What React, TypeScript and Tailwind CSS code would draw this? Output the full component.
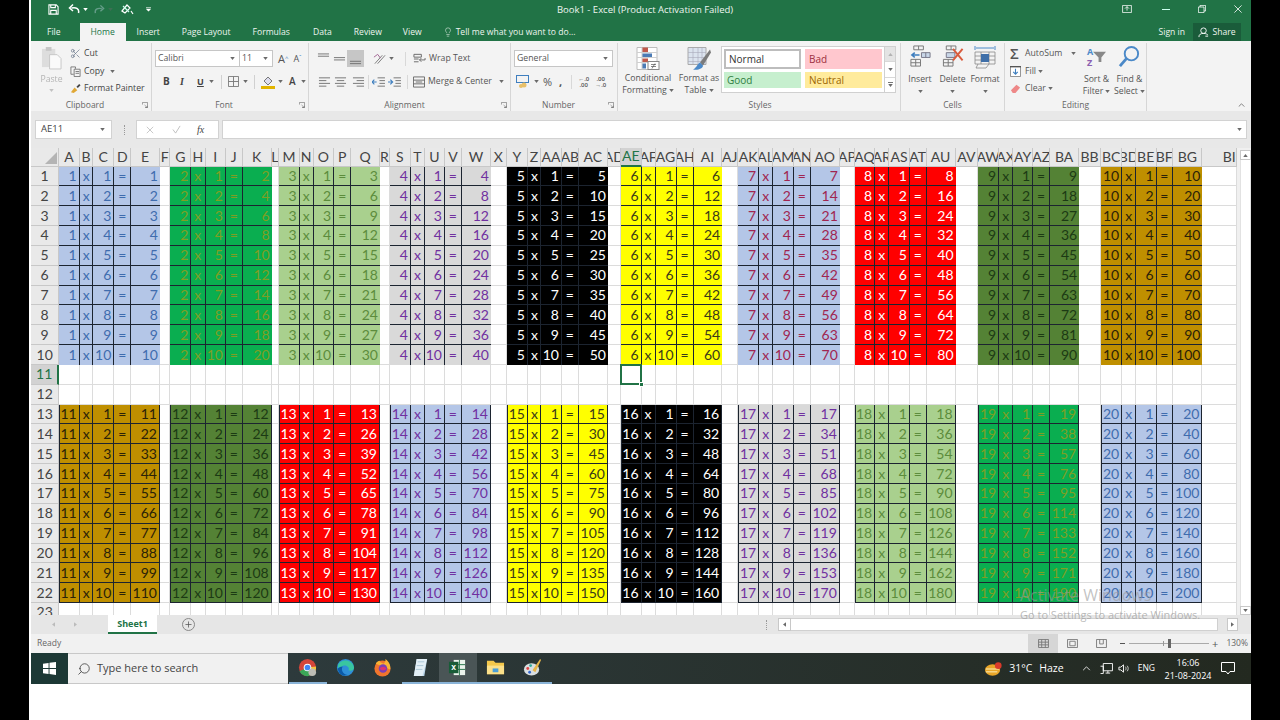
import React from "react";
import { Scissors, Lightbulb, Plus, Search } from "lucide-react";

const LETTERS = (() => {
  const out: string[] = [];
  const A = "ABCDEFGHIJKLMNOPQRSTUVWXYZ";
  for (const c of A) out.push(c);
  for (const c of A) out.push("A" + c);
  for (const c of A) out.push("B" + c);
  return out;
})();

const GROUPS: Record<number, string> = {
  1: "bg-[#b4c6e7] text-[#3f6cae]",
  2: "bg-[#0aae50] text-[#7f9f24]",
  3: "bg-[#a9d08e] text-[#5c8c3c]",
  4: "bg-[#d9d9d9] text-[#7030a0]",
  5: "bg-black text-white",
  6: "bg-[#ffff00] text-[#3a3a1a]",
  7: "bg-[#b4c6e7] text-[#a02550]",
  8: "bg-[#ff0000] text-white",
  9: "bg-[#548235] text-[#1c3a14]",
  10: "bg-[#bf8f00] text-[#2a2208]",
  11: "bg-[#bf8f00] text-[#2a2208]",
  12: "bg-[#548235] text-[#1c3a14]",
  13: "bg-[#ff0000] text-white",
  14: "bg-[#b4c6e7] text-[#7030a0]",
  15: "bg-[#ffff00] text-[#3a3a1a]",
  16: "bg-black text-white",
  17: "bg-[#d9d9d9] text-[#7030a0]",
  18: "bg-[#a9d08e] text-[#5c8c3c]",
  19: "bg-[#0aae50] text-[#7f9f24]",
  20: "bg-[#b4c6e7] text-[#3f6cae]",
};

function Caret({ className = "" }: { className?: string }) {
  return (
    <svg viewBox="0 0 6 4" className={"w-[5px] h-[3px] shrink-0 " + className}>
      <path d="M0 0h6L3 4z" fill="#6a6a6a" />
    </svg>
  );
}

function Cell({ r, c }: { r: number; c: number }) {
  const pos = c % 6;
  const g = Math.floor(c / 6);
  const top = r >= 1 && r <= 10;
  const bot = r >= 13 && r <= 22;
  if (pos !== 5 && (top || bot)) {
    const n = top ? g + 1 : g + 11;
    const m = top ? r : r - 12;
    const val = [String(n), "x", String(m), "=", String(n * m)][pos];
    const align = pos === 1 ? "justify-start pl-[3px]" : pos === 3 ? "justify-center" : "justify-end pr-[2px]";
    const right = top ? (pos < 4 ? "border-r border-r-[#1c2430]" : "") : "border-r border-r-[#1c2430]";
    const bottom = top && r === 10 ? "" : "border-b border-b-[#1c2430]";
    const left = bot && pos === 0 ? "border-l border-l-[#1c2430]" : "";
    return (
      <div className={`flex items-center overflow-hidden whitespace-nowrap text-[14px] leading-none ${align} ${GROUPS[n]} ${right} ${bottom} ${left}`}>
        {val}
      </div>
    );
  }
  if (r === 11 && c === 30) {
    return (
      <div className="relative border-r border-b border-[#dcdcdc] bg-white">
        <div className="absolute left-[-1px] top-[-1px] right-[-1px] bottom-[-1px] border-2 border-[#217346] z-10" />
        <div className="absolute right-[-3px] bottom-[-3px] w-[5px] h-[5px] bg-[#217346] border border-white z-20" />
      </div>
    );
  }
  return <div className="border-r border-b border-[#dcdcdc] bg-white" />;
}

function Sheet() {
  const cols = Array.from({ length: 60 }, (_, i) => i);
  const rows = Array.from({ length: 23 }, (_, i) => i + 1);
  return (
    <div className="flex-1 overflow-hidden bg-[#e9e9e9] font-['Lato'] text-[#444]">
      <div className="grid grid-rows-[18.5px] auto-rows-[19.85px] grid-cols-[28.3px_20.4px_13.6px_21px_17px_28.7px_10.3px_21px_14.4px_20.3px_16.7px_29px_7.6px_20.4px_14px_20.6px_17px_28.7px_10px_21px_14px_20px_17px_29px_16px_21px_13px_21px_17px_29px_13px_20.7px_14px_21px_17px_28.6px_16px_21px_14px_20.7px_16.7px_29.3px_15px_20.3px_14px_20.7px_16.7px_29px_22.6px_21px_14px_20px_17px_29px_22px_21px_13.7px_20.7px_16.6px_29.4px_34.3px]">
        <div className="relative bg-[#e9e9e9] border-r border-b border-[#c8c8c8] overflow-hidden">
          <svg viewBox="0 0 12 12" className="w-[12px] h-[12px] ml-[14px] mt-[4px]">
            <path d="M12 0v12H0z" fill="#b4b4b4" />
          </svg>
        </div>
        {cols.map((c) => {
          const active = c === 30;
          const label = c === 59 ? "BI" : LETTERS[c];
          return (
            <div
              key={c}
              className={`flex items-center overflow-hidden whitespace-nowrap text-[14px] leading-none ${c === 59 ? "justify-end" : "justify-center"} border-r border-b ${
                active ? "bg-[#d2d2d2] text-[#217346] border-r-[#c8c8c8] border-b-2 border-b-[#217346]" : "bg-[#e9e9e9] border-[#c8c8c8]"
              }`}
            >
              {label}
            </div>
          );
        })}
        {rows.map((r) => (
          <React.Fragment key={r}>
            <div
              className={`flex items-center justify-center text-[14px] leading-none border-b ${
                r === 11 ? "bg-[#d2d2d2] text-[#217346] border-r-2 border-r-[#217346] border-b-[#c8c8c8]" : "bg-[#e9e9e9] border-r border-[#c8c8c8]"
              }`}
            >
              {r}
            </div>
            {cols.map((c) => (
              <Cell key={c} r={r} c={c} />
            ))}
          </React.Fragment>
        ))}
      </div>
    </div>
  );
}

function Launcher() {
  return (
    <svg viewBox="0 0 7 7" className="absolute right-[3px] top-[3px] w-[6px] h-[6px]">
      <path d="M.5 3V.5h6v6H3.5M3 3.5l3 3M4 6.5h2.2V4.5" fill="none" stroke="#777" strokeWidth=".8" />
    </svg>
  );
}

function Group({ w, label, launcher, lc = "", children }: { w: string; label: string; launcher?: boolean; lc?: string; children: React.ReactNode }) {
  return (
    <div className={`${w} relative h-[68px] mt-[2px] border-r border-[#d6d6d6] flex flex-col shrink-0`}>
      <div className="flex-1 min-h-0">{children}</div>
      <div className={`relative h-[12px] flex items-center justify-center text-[8.5px] leading-none text-[#666] ${lc}`}>
        {label}
        {launcher && <Launcher />}
      </div>
    </div>
  );
}

function Lines({ kind }: { kind: "top" | "mid" | "bot" | "left" | "center" | "right" | "in" | "out" }) {
  const c = "#707070";
  const paths: Record<string, string> = {
    top: "M1 1h12M1 3.5h12",
    mid: "M1 5h12M1 7.5h12",
    bot: "M1 9h12M1 11.5h12",
    left: "M1 2h12M1 5h8M1 8h12M1 11h8",
    center: "M1 2h12M3 5h8M1 8h12M3 11h8",
    right: "M1 2h12M5 5h8M1 8h12M5 11h8",
    in: "M6 2h8M8 5h6M8 8h6M6 11h8",
    out: "M6 2h8M8 5h6M8 8h6M6 11h8",
  };
  return (
    <svg viewBox="0 0 14 13" className="w-[13px] h-[12px] shrink-0">
      <path d={paths[kind]} stroke={c} strokeWidth="1" fill="none" />
      {kind === "in" && <path d="M5 6.5H0M2.5 4L0 6.5 2.5 9" stroke="#3f7fbf" strokeWidth="1.2" fill="none" />}
      {kind === "out" && <path d="M0 6.5h5M2.5 4L5 6.5 2.5 9" stroke="#3f7fbf" strokeWidth="1.2" fill="none" />}
    </svg>
  );
}

function Clipboard() {
  return (
    <Group w="w-[121px]" label="Clipboard" launcher lc="pr-[12px]">
      <div className="flex pt-[1px]">
        <div className="w-[39px] flex flex-col items-center opacity-60 pt-[2px] pl-[2px]">
          <svg viewBox="0 0 22 25" className="w-[21px] h-[24px]">
            <rect x="1" y="3" width="14" height="19" fill="#cfcfcf" />
            <rect x="5" y="1" width="6" height="4" fill="#a9a9a9" />
            <path d="M9 9h8l4 4v11H9z" fill="#fff" stroke="#aaa" />
          </svg>
          <div className="text-[8.7px] leading-none mt-[5px] text-[#8a8a8a]">Paste</div>
          <Caret className="mt-[5px] opacity-60" />
        </div>
        <div className="flex flex-col pt-[1px] text-[8.7px] text-[#444]">
          <div className="h-[17.5px] flex items-center">
            <Scissors className="w-[11px] h-[11px] text-[#5a6a80] mr-[3px]" strokeWidth={1.4} />
            Cut
          </div>
          <div className="h-[17.5px] flex items-center">
            <svg viewBox="0 0 12 12" className="w-[11px] h-[11px] mr-[3px]">
              <path d="M1 1h5v2M1 1v8h3M4.5 3.5H11v8H4.5zM6 6h4M6 8h4" fill="none" stroke="#6a6a6a" strokeWidth=".9" />
            </svg>
            Copy
            <Caret className="ml-[6px]" />
          </div>
          <div className="h-[17.5px] flex items-center">
            <svg viewBox="0 0 12 12" className="w-[11px] h-[11px] mr-[3px]">
              <path d="M1 10l4-5 3 3-4 3z" fill="#e0a836" />
              <path d="M7 4l3-3 1.5 1.5-3 3z" fill="#444" />
            </svg>
            Format Painter
          </div>
        </div>
      </div>
    </Group>
  );
}

function Font() {
  return (
    <Group w="w-[157px]" label="Font" launcher lc="pr-[12px]">
      <div className="flex flex-col pl-[3px] pt-[7px]">
        <div className="flex items-center h-[17px]">
          <div className="w-[85px] h-full bg-white border border-[#c6c6c6] flex items-center justify-between pl-[2px] pr-[4px] text-[8.7px] text-[#555]">
            Calibri <Caret />
          </div>
          <div className="w-[33px] h-full bg-white border border-l-0 border-[#c6c6c6] flex items-center justify-between pl-[2px] pr-[4px] text-[8.7px] text-[#555]">
            11 <Caret />
          </div>
          <div className="ml-[5px] text-[11px] leading-none text-[#555]">A<sup className="text-[6px] text-[#3f7fbf]">^</sup></div>
          <div className="ml-[5px] text-[9px] leading-none text-[#555]">A<sup className="text-[6px] text-[#3f7fbf]">ˇ</sup></div>
        </div>
        <div className="flex items-center h-[17px] mt-[6px] text-[10px] text-[#444]">
          <span className="ml-[8px] w-[17px] font-bold">B</span>
          <span className="w-[17px] italic font-['Liberation_Serif'] font-bold">I</span>
          <span className="w-[12px] underline font-bold text-[9px]">U</span>
          <Caret />
          <div className="w-px h-[14px] bg-[#d0d0d0] ml-[7px]" />
          <svg viewBox="0 0 12 12" className="w-[11px] h-[11px] ml-[6px]">
            <path d="M.5.5h11v11H.5zM6 .5v11M.5 6h11" fill="none" stroke="#777" />
          </svg>
          <Caret className="ml-[4px]" />
          <div className="w-px h-[14px] bg-[#d0d0d0] ml-[6px]" />
          <svg viewBox="0 0 14 14" className="w-[14px] h-[14px] ml-[6px]">
            <path d="M3 6l4-4 4 4-4 4z" fill="#dde" stroke="#777" />
            <rect x="0" y="11" width="14" height="3" fill="#e2b400" />
          </svg>
          <Caret className="ml-[3px]" />
          <span className="ml-[6px] text-[#444] font-semibold">A</span>
          <Caret className="ml-[5px]" />
        </div>
      </div>
    </Group>
  );
}

function Alignment() {
  return (
    <Group w="w-[202px]" label="Alignment" launcher lc="pr-[10px]">
      <div className="flex flex-col pl-[6px] pt-[7px] text-[8.7px] text-[#555]">
        <div className="flex items-center h-[17px]">
          <div className="w-[16px] flex justify-center"><Lines kind="top" /></div>
          <div className="w-[16px] flex justify-center"><Lines kind="mid" /></div>
          <div className="w-[17px] h-[17px] bg-[#c6c6c6] flex items-center justify-center"><Lines kind="bot" /></div>
          <svg viewBox="0 0 14 12" className="w-[13px] h-[12px] ml-[9px]">
            <path d="M2 11l8-9M5 11l8-9" stroke="#777" />
            <path d="M1 4l4-3 3 4" stroke="#a06090" fill="none" />
          </svg>
          <Caret className="ml-[3px]" />
          <div className="w-px h-[14px] bg-[#d8d8d8] ml-[11px]" />
          <svg viewBox="0 0 14 12" className="w-[13px] h-[12px] ml-[7px]">
            <path d="M1 1h8v3H1zM1 6h5M1 9h5M7 7h6v-2M9 5l-2 2 2 2" fill="none" stroke="#666" />
          </svg>
          <span className="ml-[3px] whitespace-nowrap">Wrap Text</span>
        </div>
        <div className="flex items-center h-[17px] mt-[6px]">
          <div className="w-[3px]" />
          <Lines kind="left" />
          <div className="w-[3px]" />
          <Lines kind="center" />
          <div className="w-[5px]" />
          <Lines kind="right" />
          <div className="w-px h-[14px] bg-[#d8d8d8] ml-[3px]" />
          <div className="w-[3px]" />
          <Lines kind="in" />
          <div className="w-[3px]" />
          <Lines kind="out" />
          <div className="w-px h-[14px] bg-[#d8d8d8] ml-[6px]" />
          <svg viewBox="0 0 13 12" className="w-[12px] h-[12px] ml-[5px]">
            <path d="M.5.5h12v11H.5zM.5 4h12M.5 8h12M3 6h7" fill="none" stroke="#666" />
          </svg>
          <span className="ml-[3px] whitespace-nowrap">Merge &amp; Center</span>
          <Caret className="ml-[7px]" />
        </div>
      </div>
    </Group>
  );
}

function NumberGroup() {
  return (
    <Group w="w-[107px]" label="Number" launcher lc="pr-[11px]">
      <div className="flex flex-col pl-[3px] pt-[7px] text-[#555]">
        <div className="w-[99px] h-[17px] bg-white border border-[#c6c6c6] flex items-center justify-between pl-[2px] pr-[4px] text-[8.7px]">
          General <Caret />
        </div>
        <div className="flex items-center h-[17px] mt-[6px] pl-[2px]">
          <svg viewBox="0 0 14 13" className="w-[14px] h-[13px]">
            <rect x=".5" y=".5" width="12" height="7" fill="none" stroke="#3f7fbf" />
            <circle cx="8" cy="10" r="2.5" fill="#e8c06a" />
            <circle cx="5" cy="11" r="2" fill="#e8c06a" />
          </svg>
          <Caret className="ml-[4px]" />
          <span className="ml-[4px] text-[11px] leading-none">%</span>
          <span className="ml-[7px] text-[11px] leading-none font-bold relative">,</span>
          <div className="w-px h-[14px] bg-[#d8d8d8] ml-[9px]" />
          <div className="ml-[5px] w-[13px] text-[6px] leading-[6px] text-center font-semibold">←.0<br />.00</div>
          <div className="ml-[4px] w-[13px] text-[6px] leading-[6px] text-center font-semibold">.00<br />→.0</div>
        </div>
      </div>
    </Group>
  );
}

function CondIcon() {
  return (
    <svg viewBox="0 0 24 24" className="w-[24px] h-[25px] mt-[2px]">
      <path d="M1 1h20v22H1z" fill="#fff" stroke="#bdbdbd" />
      <rect x="6" y="1" width="6" height="5" fill="#c0584a" />
      <rect x="6" y="7" width="10" height="4" fill="#4b7bb5" />
      <rect x="6" y="12" width="6" height="4" fill="#c0584a" />
      <rect x="6" y="17" width="4" height="5" fill="#4b7bb5" />
      <path d="M1 6h20M1 11h20M1 16h20M6 1v22" stroke="#cfcfcf" fill="none" />
      <rect x="12" y="15" width="11" height="8" fill="#fff" stroke="#888" />
      <path d="M15 18h5M15 20h5M19 17l-3 5" stroke="#555" strokeWidth=".7" />
    </svg>
  );
}

function TableIcon() {
  return (
    <svg viewBox="0 0 24 24" className="w-[24px] h-[25px] mt-[2px]">
      <path d="M1 1h18v17H1z" fill="#dbe3ee" stroke="#aaa" />
      <path d="M1 6h18M1 11h18M1 15h18M6 1v17M11 1v17M15 1v17" stroke="#aab" strokeWidth=".6" />
      <path d="M23 3L13 16l3 3L24 6z" fill="#7b7b7b" />
      <path d="M13 16c-3 2-4 6-7 7 5 1 10-1 10-4z" fill="#4b89c8" />
    </svg>
  );
}

function Styles() {
  return (
    <Group w="w-[283px]" label="Styles" lc="pl-[2px]">
      <div className="flex text-[8.7px] text-[#555] leading-[12px] pt-[1px]">
        <div className="w-[58px] ml-[1px] flex flex-col items-center">
          <CondIcon />
          <div className="mt-[1px] whitespace-nowrap">Conditional</div>
          <div className="flex items-center gap-[2px] whitespace-nowrap">Formatting <Caret /></div>
        </div>
        <div className="w-[42px] ml-[1px] flex flex-col items-center">
          <TableIcon />
          <div className="mt-[1px] whitespace-nowrap">Format as</div>
          <div className="flex items-center gap-[2px] whitespace-nowrap">Table <Caret /></div>
        </div>
        <div className="ml-[1px] w-[175px] h-[47px] mt-[2px] bg-white border border-[#d0d0d0] flex">
          <div className="grid grid-cols-[77px_77px] grid-rows-[20px_16px] gap-x-[4px] gap-y-[3px] pl-[2px] pt-[2px] text-[10px] leading-none">
            <div className="bg-white border-2 border-[#bdbdbd] flex items-center pl-[3px] text-[#333]">Normal</div>
            <div className="bg-[#ffc7ce] flex items-center pl-[4px] text-[#9c3040]">Bad</div>
            <div className="bg-[#c6efce] flex items-center pl-[3px] text-[#2f7d3e]">Good</div>
            <div className="bg-[#ffeb9c] flex items-center pl-[4px] text-[#9c6500]">Neutral</div>
          </div>
          <div className="ml-auto w-[11px] h-full flex flex-col border-l border-[#d0d0d0] text-[#777]">
            <div className="flex-1 bg-[#e4e4e4] flex items-center justify-center"><Caret className="rotate-180 opacity-40" /></div>
            <div className="flex-1 flex items-center justify-center border-y border-[#d8d8d8]"><Caret /></div>
            <div className="flex-1 flex flex-col items-center justify-center gap-[1px]"><div className="w-[5px] h-px bg-[#777]" /><Caret /></div>
          </div>
        </div>
      </div>
    </Group>
  );
}

function BigButton({ label, icon, w, two }: { label: string; icon: React.ReactNode; w: string; two?: string }) {
  return (
    <div className={`${w} flex flex-col items-center text-[8.7px] text-[#555] leading-[12px]`}>
      <div className="h-[25px] flex items-center justify-center">{icon}</div>
      <div className="mt-[4px] whitespace-nowrap">{label}</div>
      {two ? (
        <div className="flex items-center gap-[2px] whitespace-nowrap">{two} <Caret /></div>
      ) : (
        <Caret className="mt-[5px]" />
      )}
    </div>
  );
}

function Cells() {
  const grid = (
    <>
      <path d="M5 1h10v4H5zM10 1v4M2 15h10v7H2zM7 15v7M2 18.5h10" fill="none" stroke="#777" />
    </>
  );
  return (
    <Group w="w-[104px]" label="Cells">
      <div className="flex pl-[3px] pt-[1px]">
        <BigButton
          w="w-[32px]"
          label="Insert"
          icon={
            <svg viewBox="0 0 24 24" className="w-[23px] h-[23px]">
              {grid}
              <path d="M13 8h9v5h-9zM17.5 8v5" fill="#c9d7e8" stroke="#778" />
              <path d="M11 10.500H3M6 8l-3 2.500L6 13" stroke="#3f7fbf" strokeWidth="1.6" fill="none" />
            </svg>
          }
        />
        <BigButton
          w="w-[33px]"
          label="Delete"
          icon={
            <svg viewBox="0 0 24 24" className="w-[24px] h-[23px]">
              {grid}
              <path d="M5 8h9v5H5z" fill="#c9d7e8" stroke="#778" />
              <path d="M12 4l10 12M22 4L12 16" stroke="#d95b3c" strokeWidth="2" />
            </svg>
          }
        />
        <BigButton
          w="w-[32px]"
          label="Format"
          icon={
            <svg viewBox="0 0 24 24" className="w-[24px] h-[24px]">
              <path d="M2 1v4M22 1v4M3 3h18" stroke="#4b89c8" fill="none" />
              <path d="M2 7h20v12H2zM2 11h20M2 15h20M8 7v12M16 7v12M5 19l-2 4h10l3-4" fill="none" stroke="#888" strokeWidth=".8" />
              <rect x="8" y="9" width="8" height="8" fill="#3f6fa8" />
            </svg>
          }
        />
      </div>
    </Group>
  );
}

function Editing() {
  return (
    <Group w="w-[142px]" label="Editing">
      <div className="flex pl-[5px] pt-[1px] text-[8.7px] text-[#555]">
        <div className="w-[70px] flex flex-col pt-[1px]">
          <div className="h-[17.5px] flex items-center">
            <span className="w-[15px] text-[15px] leading-none text-[#555] font-semibold">Σ</span>
            AutoSum
            <Caret className="ml-[9px]" />
          </div>
          <div className="h-[17.5px] flex items-center">
            <svg viewBox="0 0 12 12" className="w-[11px] h-[11px] mr-[4px]">
              <path d="M.5.5h11v11H.5z" fill="#fff" stroke="#888" />
              <path d="M0 .5h12" stroke="#555" strokeWidth="2" />
              <path d="M6 3v6M3.500 6.500L6 9l2.500-2.500" stroke="#3f7fbf" strokeWidth="1.2" fill="none" />
            </svg>
            Fill
            <Caret className="ml-[2px]" />
          </div>
          <div className="h-[17.5px] flex items-center">
            <svg viewBox="0 0 12 12" className="w-[11px] h-[11px] mr-[4px]">
              <path d="M1 8l6-6 4 3-5 6H3z" fill="#e88" />
            </svg>
            Clear
            <Caret className="ml-[2px]" />
          </div>
        </div>
        <BigButton
          w="w-[33px]"
          label="Sort &"
          two="Filter"
          icon={
            <div className="flex items-center">
              <div className="text-[9px] leading-[11px] font-bold">
                <div className="text-[#4b89c8]">A</div>
                <div className="text-[#8a5fb0]">Z</div>
              </div>
              <svg viewBox="0 0 14 14" className="w-[13px] h-[13px]">
                <path d="M0 2h14L9 8v5H6V8z" fill="#888" />
              </svg>
            </div>
          }
        />
        <BigButton
          w="w-[33px]"
          label="Find &"
          two="Select"
          icon={
            <svg viewBox="0 0 24 24" className="w-[23px] h-[23px]">
              <circle cx="14" cy="9" r="7" fill="none" stroke="#4b89c8" strokeWidth="2" />
              <path d="M9 14l-7 8" stroke="#4b89c8" strokeWidth="3" />
            </svg>
          }
        />
      </div>
    </Group>
  );
}

function Ribbon() {
  return (
    <div className="h-[70px] bg-[#f3f3f3] flex items-start relative">
      <Clipboard />
      <Font />
      <Alignment />
      <NumberGroup />
      <Styles />
      <Cells />
      <Editing />
      <div className="ml-auto mt-[62px] mr-[6px]">
        <svg viewBox="0 0 8 5" className="w-[7px] h-[4px]">
          <path d="M.5 4.500L4 1l3.500 3.500" stroke="#666" fill="none" />
        </svg>
      </div>
    </div>
  );
}

function TitleBar() {
  const tabs: [string, string][] = [
    ["File", "ml-[16px]"],
    ["Home", ""],
    ["Insert", "ml-[11px]"],
    ["Page Layout", "ml-[22px]"],
    ["Formulas", "ml-[22px]"],
    ["Data", "ml-[23px]"],
    ["Review", "ml-[22px]"],
    ["View", "ml-[21px]"],
  ];
  return (
    <div className="h-[41px] bg-[#217346] text-[#eef5f0] flex flex-col">
      <div className="h-[23px] pb-[5px] flex items-center text-[8.7px]">
        <div className="flex-1 flex items-center pl-[17px]">
          <svg viewBox="0 0 12 12" className="w-[11px] h-[11px]">
            <path d="M1 1h8l2 2v8H1zM3 1v3h5V1M3 11V7h6v4" fill="none" stroke="#fff" strokeWidth="1.2" />
          </svg>
          <svg viewBox="0 0 12 12" className="w-[12px] h-[12px] ml-[9px]">
            <path d="M10.500 10c1-4-2-6-7-5M5 1.500L1.500 5 5 8" fill="none" stroke="#fff" strokeWidth="1.5" />
          </svg>
          <Caret className="ml-[3px] brightness-[3]" />
          <svg viewBox="0 0 12 12" className="w-[11px] h-[11px] ml-[6px] opacity-40">
            <path d="M1.500 10c-1-4 2-6 7-5M7 1.500L10.500 5 7 8" fill="none" stroke="#cde" strokeWidth="1.500" />
          </svg>
          <Caret className="ml-[3px] opacity-40" />
          <svg viewBox="0 0 14 12" className="w-[14px] h-[12px] ml-[7px]">
            <path d="M2 8l5-6 3 3-5 5zM11 8l2 3" fill="none" stroke="#fff" strokeWidth="1.200" />
            <path d="M3 3l6 6" stroke="#cfe" strokeWidth="1.200" />
          </svg>
          <svg viewBox="0 0 6 5" className="w-[5px] h-[5px] ml-[12px]">
            <path d="M0 0h6M0 2h6L3 5z" fill="#fff" stroke="none" />
            <path d="M0 .5h6" stroke="#fff" />
          </svg>
        </div>
        <div className="whitespace-nowrap text-[9.5px] pt-[2px]">Book1 - Excel (Product Activation Failed)</div>
        <div className="flex-1 flex items-center justify-end pr-[9px]">
          <svg viewBox="0 0 12 10" className="w-[10px] h-[8px]">
            <path d="M.5.5h11v9H.5z" fill="none" stroke="#fff" />
            <path d="M6 2v5M3.500 4.500L6 2l2.500 2.500" stroke="#fff" fill="none" />
          </svg>
          <div className="w-[8px] h-px bg-[#cfe] ml-[30px]" />
          <svg viewBox="0 0 10 10" className="w-[8px] h-[8px] ml-[28px]">
            <path d="M.5 2.500h7v7h-7zM2.500 2.500v-2h7v7h-2" fill="none" stroke="#fff" />
          </svg>
          <svg viewBox="0 0 10 10" className="w-[8px] h-[8px] ml-[28px]">
            <path d="M.5.5l9 9M9.500.5l-9 9" stroke="#fff" />
          </svg>
        </div>
      </div>
      <div className="h-[18px] flex items-end text-[8.6px] leading-none">
        {tabs.map(([t, m]) =>
          t === "Home" ? (
            <div key={t} className="h-[18px] w-[46px] ml-[19px] bg-[#f3f3f3] text-[#217346] flex items-center justify-center">
              Home
            </div>
          ) : (
            <div key={t} className={`h-[18px] flex items-center whitespace-nowrap ${m}`}>
              {t}
            </div>
          )
        )}
        <div className="h-[18px] flex items-center ml-[21px] whitespace-nowrap">
          <Lightbulb className="w-[10px] h-[10px] mr-[3px]" strokeWidth={1.3} />
          Tell me what you want to do...
        </div>
        <div className="ml-auto h-[18px] flex items-center mr-[10px]">
          <span>Sign in</span>
          <div className="ml-[8px] h-[18px] w-[48px] bg-[#1a5c3a] flex items-center justify-center gap-[3px]">
            <svg viewBox="0 0 12 12" className="w-[11px] h-[11px]">
              <circle cx="6" cy="4" r="3" fill="none" stroke="#fff" />
              <path d="M1 11c0-3 2-4 5-4s4 1 5 2M8 10h3" fill="none" stroke="#fff" />
            </svg>
            Share
          </div>
        </div>
      </div>
    </div>
  );
}

function FormulaBar() {
  return (
    <div className="h-[37px] bg-[#e8e8e8] flex items-start pt-[9px] text-[#444] shrink-0">
      <div className="ml-[4px] w-[77px] h-[19px] bg-white border border-[#d2d2d2] flex items-center justify-between pl-[5px] pr-[6px] text-[9.5px]">
        AE11 <Caret />
      </div>
      <div className="ml-[12px] w-[2px] h-[10px] mt-[5px] border-l border-dotted border-[#999]" />
      <div className="ml-[10px] w-[83px] h-[19px] bg-white border border-[#d2d2d2] flex items-center">
        <svg viewBox="0 0 10 10" className="w-[8px] h-[8px] ml-[9px]">
          <path d="M1 1l8 8M9 1l-8 8" stroke="#bbb" />
        </svg>
        <svg viewBox="0 0 10 10" className="w-[9px] h-[9px] ml-[18px]">
          <path d="M1 5l3 4 5-8" stroke="#bbb" fill="none" />
        </svg>
        <span className="ml-[16px] font-['Liberation_Serif'] italic text-[10px] text-[#444]">fx</span>
      </div>
      <div className="ml-[3px] w-[1025px] h-[19px] bg-white border border-[#d2d2d2] flex items-center justify-end pr-[4px]">
        <Caret />
      </div>
    </div>
  );
}

function Scroll() {
  return (
    <div className="w-[14px] bg-[#f0f0f0] pl-[3px] pt-[2px] flex flex-col">
      <div className="h-[10px] w-[11px] bg-white border border-[#c8c8c8] flex items-center justify-center">
        <Caret className="rotate-180" />
      </div>
      <div className="flex-1 w-[11px] bg-white border-x border-[#e2e2e2]" />
      <div className="h-[9px] w-[11px] bg-white border border-[#c8c8c8] flex items-center justify-center">
        <Caret />
      </div>
    </div>
  );
}

function TabsBar() {
  return (
    <div className="h-[19px] bg-[#e6e6e6] flex items-center text-[#555] shrink-0">
      <svg viewBox="0 0 4 6" className="w-[3px] h-[5px] ml-[21px]"><path d="M4 0v6L0 3z" fill="#bbb" /></svg>
      <svg viewBox="0 0 4 6" className="w-[3px] h-[5px] ml-[19px]"><path d="M0 0v6l4-3z" fill="#bbb" /></svg>
      <div className="ml-[31px] w-[49px] h-[19px] bg-white border-b-2 border-[#217346] flex items-center justify-center text-[9px] font-bold text-[#217346]">
        Sheet1
      </div>
      <div className="ml-[25px] w-[13px] h-[13px] rounded-full border border-[#888] flex items-center justify-center">
        <Plus className="w-[9px] h-[9px] text-[#555]" strokeWidth={2} />
      </div>
      <div className="ml-[571px] w-[2px] h-[10px] border-l border-dotted border-[#999]" />
      <div className="ml-[10px] flex items-center h-[13px]">
        <div className="w-[13px] h-[13px] bg-white border border-[#c8c8c8] flex items-center justify-center">
          <Caret className="rotate-90" />
        </div>
        <div className="w-[427px] h-[13px] bg-white border-y border-r border-[#d0d0d0]" />
        <div className="w-[9px]" />
        <div className="w-[11px] h-[13px] bg-white border border-[#c8c8c8] flex items-center justify-center">
          <Caret className="-rotate-90" />
        </div>
      </div>
    </div>
  );
}

function StatusBar() {
  return (
    <div className="h-[19px] bg-[#f1f1f1] flex items-center text-[8.5px] text-[#666] shrink-0">
      <span className="ml-[6px]">Ready</span>
      <div className="ml-auto flex items-center h-full">
        <div className="w-[30px] h-full bg-[#d6d6d6] flex items-center justify-center">
          <svg viewBox="0 0 12 10" className="w-[11px] h-[9px]"><path d="M.5.5h11v9H.5zM.5 3.500h11M.5 6.500h11M4 .5v9M8 .5v9" fill="none" stroke="#777" /></svg>
        </div>
        <svg viewBox="0 0 12 10" className="w-[11px] h-[9px] ml-[9px]"><path d="M.5.5h11v9H.5zM3 2.500h6v5H3z" fill="none" stroke="#777" /></svg>
        <svg viewBox="0 0 12 10" className="w-[11px] h-[9px] ml-[18px]"><path d="M.5.5h11v9H.5zM4 .5v5h4v-5" fill="none" stroke="#777" /></svg>
        <div className="w-[5px] h-px bg-[#555] ml-[13px]" />
        <div className="ml-[4px] w-[80px] h-px bg-[#aaa] relative">
          <div className="absolute left-[39px] top-[-4px] w-[3px] h-[9px] bg-[#666]" />
          <div className="absolute left-[34px] top-[-2px] w-px h-[5px] bg-[#999]" />
        </div>
        <span className="ml-[3px] text-[11px] leading-none text-[#555]">+</span>
        <span className="ml-[8px] mr-[3px]">130%</span>
      </div>
    </div>
  );
}

function Taskbar() {
  const apps = [
    {
      bar: true,
      icon: (
        <svg viewBox="0 0 20 20" className="w-[19px] h-[19px]">
          <circle cx="10" cy="10" r="9" fill="#d5453a" />
          <path d="M10 10L1.500 14A9 9 0 0 0 14 18z" fill="#3aa757" />
          <path d="M10 10l4 8a9 9 0 0 0 5-9z" fill="#f5c33b" />
          <circle cx="10" cy="10" r="4" fill="#fff" />
          <circle cx="10" cy="10" r="3" fill="#4285f4" />
          <circle cx="15" cy="15" r="4" fill="#bdbdb5" />
        </svg>
      ),
    },
    {
      bar: false,
      icon: (
        <svg viewBox="0 0 20 20" className="w-[19px] h-[19px]">
          <circle cx="10" cy="10" r="9" fill="#2f8fd8" />
          <path d="M2 8c2-7 15-8 17 2 0 3-3 4-6 3 2-3-2-6-5-5S4 12 5 15C3 13 2 11 2 8z" fill="#39c6a0" />
          <path d="M7 9c-2 3 0 8 5 9-6 2-10-3-10-7 1-1 3-2 5-2z" fill="#0b5aa8" />
        </svg>
      ),
    },
    {
      bar: false,
      icon: (
        <svg viewBox="0 0 20 20" className="w-[19px] h-[19px]">
          <circle cx="10" cy="11" r="8.500" fill="#f0752d" />
          <path d="M3 6c1-2 3-3 4-3 0 2 2 2 4 3 3-2 2-4 2-5 4 3 6 7 5 11z" fill="#f9b233" />
          <circle cx="10.500" cy="11" r="4.500" fill="#7b3fb5" />
          <path d="M7 11c2-2 5-2 7 0-1 2-5 3-7 0z" fill="#e0326e" />
        </svg>
      ),
    },
    {
      bar: true,
      icon: (
        <svg viewBox="0 0 20 20" className="w-[19px] h-[19px]">
          <path d="M6 1h11l-3 18H3z" fill="#bcd7ea" />
          <path d="M6 1h11l-5 18H3z" fill="#e3eff6" />
          <path d="M7 4h7M6 8h7M5 12h7" stroke="#8fb3c9" strokeWidth=".7" />
        </svg>
      ),
    },
    {
      bar: true,
      active: true,
      icon: (
        <svg viewBox="0 0 20 20" className="w-[19px] h-[19px]">
          <rect x="6" y="2" width="12" height="16" fill="#eaf3ec" />
          <path d="M12 2v16M6 7h12M6 12h12" stroke="#217346" strokeWidth="1" />
          <rect x="1" y="4" width="10" height="12" fill="#185c37" />
          <text x="6" y="13" textAnchor="middle" fontSize="9" fontWeight="700" fill="#fff" fontFamily="Liberation Sans">x</text>
        </svg>
      ),
    },
    {
      bar: true,
      icon: (
        <svg viewBox="0 0 20 20" className="w-[19px] h-[19px]">
          <path d="M1 3h7l2 2h9v12H1z" fill="#f4c84b" />
          <path d="M1 8h18v9H1z" fill="#fbe08a" />
          <rect x="7" y="11" width="6" height="4" fill="#4a9fd8" />
        </svg>
      ),
    },
    {
      bar: true,
      icon: (
        <svg viewBox="0 0 20 20" className="w-[19px] h-[19px]">
          <ellipse cx="9" cy="12" rx="8" ry="6.500" fill="#d8dee0" />
          <circle cx="5" cy="11" r="1.500" fill="#d44" />
          <circle cx="8" cy="8" r="1.500" fill="#3a9" />
          <circle cx="7" cy="15" r="1.500" fill="#36c" />
          <path d="M10 13L18 1l1 1-6 13z" fill="#e8b54a" />
        </svg>
      ),
    },
  ];
  return (
    <div className="h-[31px] flex text-white shrink-0">
      <div className="w-[37px] bg-[#1c3835] flex items-center justify-center">
        <svg viewBox="0 0 14 14" className="w-[13px] h-[13px]">
          <path d="M0 2l6-1v5.500H0zM7 .8L14 0v6.500H7zM0 7.500h6V13l-6-1zM7 7.500h7V14l-7-1z" fill="#fff" />
        </svg>
      </div>
      <div className="w-[220px] bg-[#f1f1f1] border-y border-[#c8c8c8] flex items-center pl-[9px] text-[11px] text-[#444]">
        <Search className="w-[14px] h-[14px] -scale-x-100 text-[#333] mr-[6px]" strokeWidth={1.3} />
        Type here to search
      </div>
      <div className="flex-1 flex items-stretch bg-linear-to-r from-[#2d3a3c] to-[#232920] pl-[1px]">
        {apps.map((a, i) => (
          <div
            key={i}
            className={`w-[37.500px] flex items-center justify-center border-b-2 ${a.bar ? "border-[#8ab4d8]" : "border-transparent"} ${a.active ? "bg-[#4a5556]" : ""}`}
          >
            {a.icon}
          </div>
        ))}
        <div className="flex-1" />
        <div className="flex items-center">
          <svg viewBox="0 0 20 16" className="w-[19px] h-[16px]">
            <ellipse cx="9" cy="9" rx="8" ry="6" fill="#e8a528" />
            <path d="M2 8h14M2 11h12" stroke="#fff2c0" />
            <circle cx="15" cy="4.500" r="3.500" fill="#d93a2b" />
          </svg>
          <span className="ml-[6px] text-[10.5px]">31°C</span>
          <span className="ml-[7px] text-[10.5px]">Haze</span>
          <svg viewBox="0 0 10 6" className="w-[9px] h-[5px] ml-[18px]">
            <path d="M1 5l4-4 4 4" fill="none" stroke="#fff" />
          </svg>
          <svg viewBox="0 0 14 12" className="w-[13px] h-[11px] ml-[9px]">
            <path d="M3.500.5h10v8h-10zM.5 3.500h3v8h-3M6 11h5M8.500 8.500V11" fill="none" stroke="#fff" />
          </svg>
          <svg viewBox="0 0 12 12" className="w-[11px] h-[11px] ml-[5px]">
            <path d="M1 4.500h2L6 2v8L3 7.500H1z" fill="none" stroke="#fff" />
            <path d="M8 4c1 1 1 3 0 4M10 3c1.500 1.500 1.500 4.500 0 6" fill="none" stroke="#fff" strokeWidth=".8" />
          </svg>
          <span className="ml-[9px] text-[8.500px]">ENG</span>
          <div className="ml-[10px] w-[46px] flex flex-col items-center text-[9px] leading-[13px]">
            <span>16:06</span>
            <span className="whitespace-nowrap">21-08-2024</span>
          </div>
          <svg viewBox="0 0 14 13" className="w-[14px] h-[13px] ml-[10px] mr-[16px]">
            <path d="M.5.5h13v9H9L7 12 5 9.500H.5z" fill="none" stroke="#fff" />
          </svg>
        </div>
      </div>
    </div>
  );
}

export default function App() {
  return (
    <div className="w-[1280px] h-[720px] bg-black flex overflow-hidden font-['Open_Sans',sans-serif]">
      <div className="ml-[29px] w-[1222px] h-full bg-white pl-[2px]">
        <div className="w-[1220px] h-[684px] flex flex-col relative">
          <TitleBar />
          <Ribbon />
          <FormulaBar />
          <div className="h-[467px] flex shrink-0 overflow-hidden">
            <Sheet />
            <Scroll />
          </div>
          <TabsBar />
          <StatusBar />
          <Taskbar />
          <div className="absolute left-[989px] top-[587px] text-[16px] leading-none text-[#9a9a9a]/60 whitespace-nowrap pointer-events-none">
            Activate Windows
          </div>
          <div className="absolute left-[989px] top-[609px] text-[11px] leading-none text-[#9a9a9a]/70 whitespace-nowrap pointer-events-none">
            Go to Settings to activate Windows.
          </div>
        </div>
      </div>
    </div>
  );
}
